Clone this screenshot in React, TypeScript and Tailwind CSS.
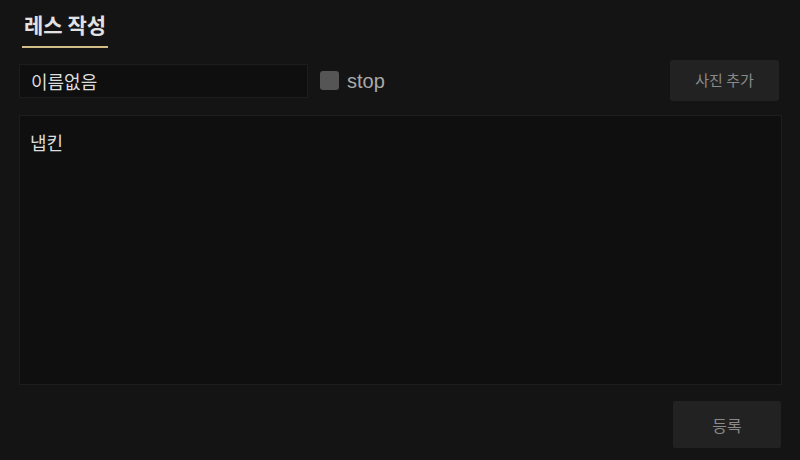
const font = { fontFamily: '"Noto Sans CJK KR", "Noto Sans", sans-serif' };

export default function App() {
  return (
    <div
      className="w-[800px] h-[460px] bg-[#141414] text-[#dcdcdc] flex flex-col"
      style={font}
    >
      {/* tab header */}
      <div className="pl-[22px] pt-[9px]">
        <div className="inline-block px-[2px] pb-[7px] border-b-2 border-[#d2bd87] text-[21px] font-semibold leading-[30px] text-[#e2e2e2]">
          레스 작성
        </div>
      </div>

      {/* name row */}
      <div className="flex items-center pl-[19px] pr-[21px] mt-[12px]">
        <input
          defaultValue="이름없음"
          className="w-[289px] h-[34px] bg-[#0f0f0f] border border-[#1d1d1d] px-[11px] text-[18px] text-[#dddddd] outline-none"
        />
        <label className="flex items-center ml-[12px] gap-[8px]">
          <span className="w-[19px] h-[19px] rounded-[3px] bg-[#555555]" />
          <span
            className="text-[20px] text-[#a9a9a9]"
            style={{ fontFamily: '"Liberation Sans", "Noto Sans", sans-serif' }}
          >
            stop
          </span>
        </label>
        <button className="ml-auto w-[109px] h-[41px] rounded-[3px] bg-[#222222] text-[15px] text-[#8a8a8a]">
          사진 추가
        </button>
      </div>

      {/* body */}
      <div className="pl-[19px] pr-[18px] mt-[14px]">
        <textarea
          defaultValue="냅킨"
          className="block w-full h-[270px] resize-none bg-[#0f0f0f] border border-[#1e1e1e] px-[10px] pt-[14px] text-[18px] leading-[24px] text-[#dddddd] outline-none"
        />
      </div>

      <div className="flex justify-end pr-[19px] mt-[16px]">
        <button className="w-[108px] h-[47px] rounded-[2px] bg-[#222222] text-[16px] text-[#8a8a8a]">
          등록
        </button>
      </div>
    </div>
  );
}
